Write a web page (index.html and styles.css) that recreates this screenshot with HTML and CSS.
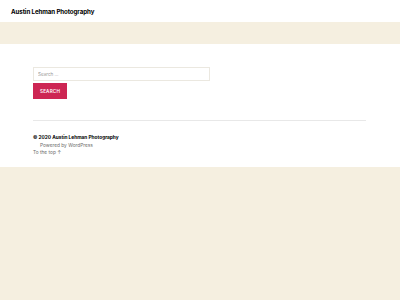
FILE: index.html
```html
<!DOCTYPE html>
<html>
<head>
<meta charset="utf-8">
<link rel="stylesheet" href="styles.css">
</head>
<body>
<header class="site-header">
  <div class="site-title">Austin Lehman Photography</div>
</header>
<div class="band"></div>
<main class="content">
  <form class="search-form">
    <input class="search-field" type="search" placeholder="Search …">
    <button class="search-submit" type="button">Search</button>
  </form>
  <hr class="divider">
  <footer class="site-footer">
    <p class="copyright">© 2020 Austin Lehman Photography</p>
    <p class="powered">Powered by WordPress</p>
    <p class="to-top">To the top ↑</p>
  </footer>
</main>
</body>
</html>
```
FILE: styles.css
```css
html, body {
  margin: 0;
  padding: 0;
}
body {
  background: #f5efe0;
  font-family: Inter, "Liberation Sans", sans-serif;
  color: #000;
}
.site-header {
  background: #fff;
  height: 22px;
  display: flex;
  align-items: center;
  padding-left: 11px;
  box-sizing: border-box;
}
.site-title {
  font-size: 6.2px;
  font-weight: 700;
  letter-spacing: -0.1px;
}
.band {
  height: 22px;
}
.content {
  background: #fff;
  height: 123px;
  box-sizing: border-box;
  padding: 23px 34px 0 33px;
}
.search-form {
  display: flex;
  flex-direction: column;
  align-items: flex-start;
  gap: 2px;
  margin: 0;
}
.search-field {
  width: 177px;
  height: 14px;
  box-sizing: border-box;
  border: 1px solid #ebe8e0;
  border-radius: 0;
  padding: 0 4px;
  font-family: inherit;
  font-size: 4.6px;
  color: #6d6d6d;
  background: #fff;
  margin: 0;
  outline: none;
}
.search-field::placeholder {
  color: #9a9a9a;
}
.search-submit {
  width: 34px;
  height: 16px;
  background: #cd2653;
  color: #fff;
  border: none;
  border-radius: 0;
  padding: 0;
  font-family: inherit;
  font-size: 4.6px;
  font-weight: 600;
  text-transform: uppercase;
  letter-spacing: 0.2px;
  margin: 0;
}
.divider {
  border: none;
  border-top: 1px solid #e8e8e8;
  margin: 21px 0 0 0;
  width: 333px;
  height: 0;
}
.site-footer {
  margin-top: 13px;
  font-size: 4.8px;
}
.site-footer p {
  margin: 0;
  height: 7.5px;
  line-height: 7.5px;
}
.copyright {
  font-weight: 700;
}
.powered {
  padding-left: 7px;
  color: #6d6d6d;
}
.to-top {
  color: #6d6d6d;
}
```
